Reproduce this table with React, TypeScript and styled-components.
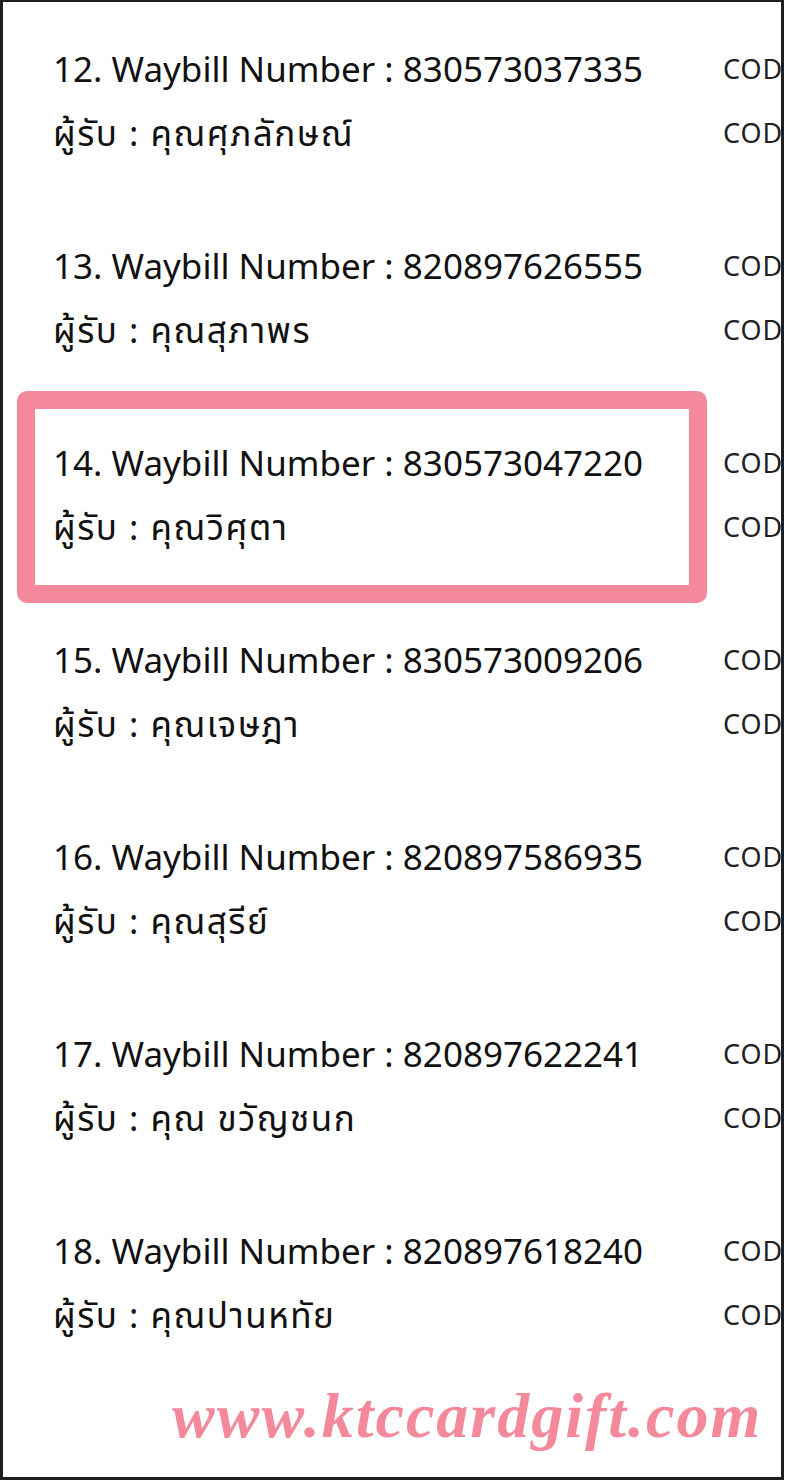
import React from "react";
import styled, { createGlobalStyle } from "styled-components";

const GlobalStyle = createGlobalStyle`
  body {
    margin: 0;
    background: #ffffff;
  }
`;

const Frame = styled.div`
  box-sizing: border-box;
  width: 784px;
  height: 1480px;
  border: 3px solid #1f1f1f;
  border-top-width: 2px;
  background: #ffffff;
  overflow: hidden;
  display: flex;
  flex-direction: column;
  padding-top: 1px;
  font-family: "Noto Sans", "Noto Sans Thai", "Loma", "Garuda", sans-serif;
  color: #111111;
`;

const Row = styled.div`
  display: flex;
  flex-direction: row;
  align-items: flex-start;
  height: 197px;
  padding-left: 14px;
`;

const Entry = styled.div<{ highlighted: boolean }>`
  box-sizing: border-box;
  flex: none;
  width: 690px;
  height: 212px;
  margin: -6px 0 -9px;
  padding: 22px 0 0 18px;
  border: 18px solid ${(props) => (props.highlighted ? "#f4899b" : "transparent")};
  border-radius: 10px;
`;

const Line = styled.p<{ thai?: boolean }>`
  margin: 0;
  height: 64px;
  line-height: 64px;
  font-size: 35px;
  letter-spacing: ${(props) => (props.thai ? "1.5px" : "0")};
  white-space: nowrap;
`;

const CodColumn = styled.div`
  flex: none;
  margin-left: 16px;
  padding-top: 34px;

  span {
    display: block;
    height: 64px;
    line-height: 64px;
    font-size: 27px;
    letter-spacing: 1px;
    color: #222222;
    white-space: nowrap;
  }
`;

const Watermark = styled.div`
  padding: 4px 0 0 169px;
  font-family: "Liberation Serif", serif;
  font-style: italic;
  font-weight: 700;
  font-size: 64px;
  line-height: 60px;
  letter-spacing: 2px;
  color: #f4899b;
  white-space: nowrap;
`;

const shipments = [
  { no: 12, waybill: "830573037335", name: "คุณศุภลักษณ์" },
  { no: 13, waybill: "820897626555", name: "คุณสุภาพร" },
  { no: 14, waybill: "830573047220", name: "คุณวิศุตา", highlighted: true },
  { no: 15, waybill: "830573009206", name: "คุณเจษฎา" },
  { no: 16, waybill: "820897586935", name: "คุณสุรีย์" },
  { no: 17, waybill: "820897622241", name: "คุณ ขวัญชนก" },
  { no: 18, waybill: "820897618240", name: "คุณปานหทัย" },
];

const App = () => {
  return (
    <>
      <GlobalStyle />
      <Frame>
        {shipments.map((item) => (
          <Row key={item.no}>
            <Entry highlighted={!!item.highlighted}>
              <Line>
                {item.no}. Waybill Number : {item.waybill}
              </Line>
              <Line thai>ผู้รับ : {item.name}</Line>
            </Entry>
            <CodColumn>
              <span>COD</span>
              <span>COD</span>
            </CodColumn>
          </Row>
        ))}
        <Watermark>www.ktccardgift.com</Watermark>
      </Frame>
    </>
  );
};

export default App;
